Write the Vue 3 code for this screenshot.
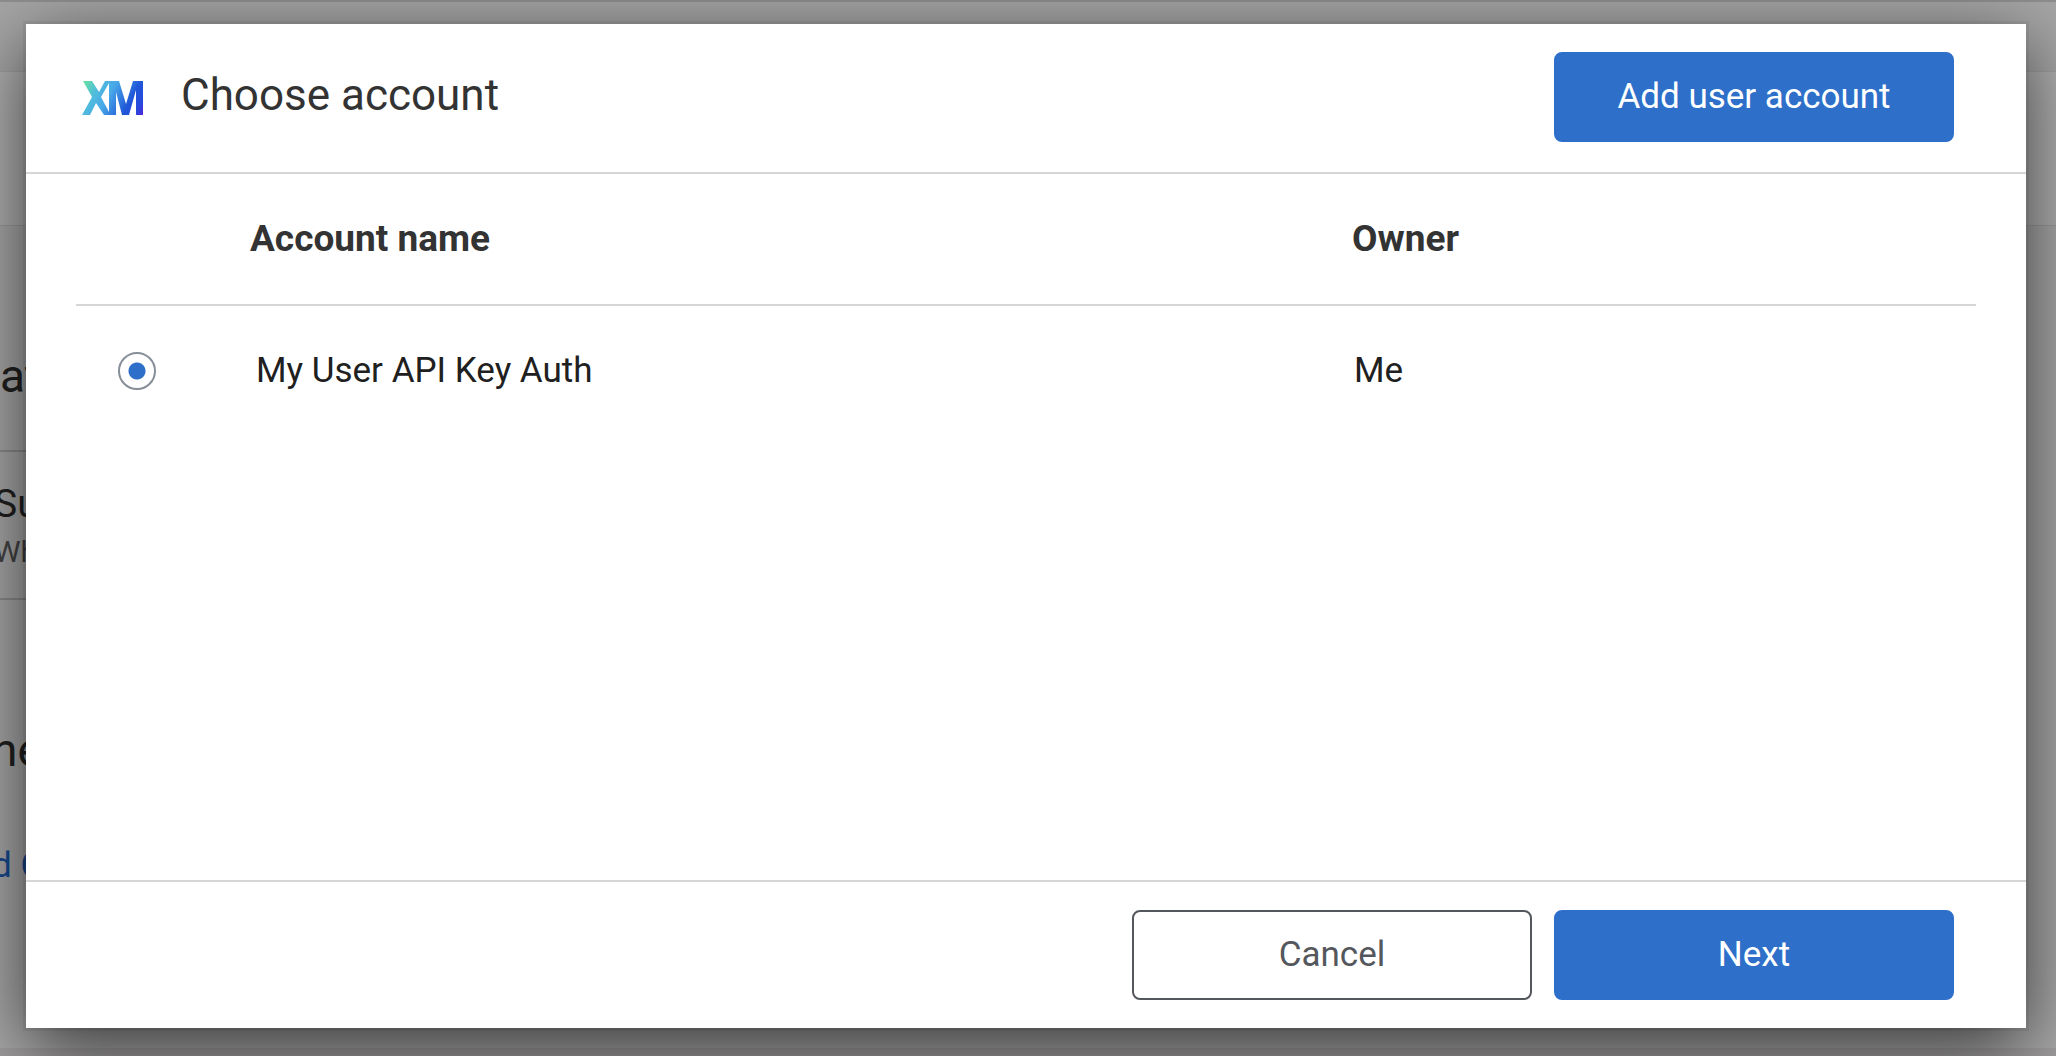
<script setup>
import { ref } from 'vue'

const accounts = [{ id: 'api-key', name: 'My User API Key Auth', owner: 'Me' }]
const selected = ref('api-key')
</script>

<template>
  <div class="screen">
    <div class="page" aria-hidden="true">
      <div class="bar top-bar"></div>
      <div class="bar sub-bar"></div>
      <div class="section heading">at</div>
      <div class="section task">
        <span class="task-name">Su</span>
        <span class="task-note">Wh</span>
      </div>
      <div class="section next-step">
        <span class="heading-text">ne</span>
        <span class="link-text">d C</span>
      </div>
      <div class="page-end"></div>
    </div>

    <div class="overlay">
      <section class="dialog" role="dialog" aria-modal="true" aria-labelledby="dialog-title">
        <header class="dialog-header">
          <svg class="logo" viewBox="0 0 62 34" aria-hidden="true">
            <defs>
              <linearGradient id="xm" gradientUnits="userSpaceOnUse" x1="2" y1="0" x2="62" y2="34">
                <stop offset="0" stop-color="#68e0a0" />
                <stop offset="0.22" stop-color="#50bcdc" />
                <stop offset="0.42" stop-color="#48a8e8" />
                <stop offset="0.72" stop-color="#2058d8" />
                <stop offset="0.88" stop-color="#2848dc" />
                <stop offset="1" stop-color="#5820d8" />
              </linearGradient>
            </defs>
            <path fill="url(#xm)" fill-rule="evenodd" d="M1 0H10L17 11L23 0H37L44 23L51 0H61V34H54V9L47 34H40L34 11V34H22L14 22L8 34H0L10 16ZM27 2L19 16L27 31Z" />
          </svg>
          <h1 id="dialog-title">Choose account</h1>
          <button type="button" class="btn primary">Add user account</button>
        </header>

        <div class="dialog-body">
          <table>
            <thead>
              <tr>
                <th class="pick"></th>
                <th class="name" scope="col">Account name</th>
                <th class="owner" scope="col">Owner</th>
              </tr>
            </thead>
            <tbody>
              <tr v-for="account in accounts" :key="account.id">
                <td class="pick">
                  <input :id="account.id" v-model="selected" type="radio" name="account" :value="account.id" />
                </td>
                <td class="name"><label :for="account.id">{{ account.name }}</label></td>
                <td class="owner">{{ account.owner }}</td>
              </tr>
            </tbody>
          </table>
        </div>

        <footer class="dialog-footer">
          <button type="button" class="btn secondary">Cancel</button>
          <button type="button" class="btn primary">Next</button>
        </footer>
      </section>
    </div>
  </div>
</template>

<style>
body {
  margin: 0;
}
</style>

<style scoped>
* {
  box-sizing: border-box;
}

.screen {
  position: relative;
  min-height: 100vh;
  overflow: hidden;
  font-family: Roboto, "Liberation Sans", sans-serif;
  font-size: 35px;
  line-height: 44px;
  color: #202020;
}

/* dimmed page behind the dialog */
.page {
  position: absolute;
  inset: 0;
  display: flex;
  flex-direction: column;
  background: #a9a9a9;
  white-space: nowrap;
}

.bar {
  flex: none;
}

.top-bar {
  height: 72px;
  border-top: 2px solid #8e8e8e;
  background: #a6a6a6;
  border-bottom: 1px solid #a0a0a0;
}

.sub-bar {
  height: 154px;
  background: #b0b0b0;
  border-bottom: 1px solid #a29c9c;
}

.section {
  flex: none;
  width: 50%;
  border-bottom: 2px solid #8c8c8c;
}

.heading {
  height: 226px;
  padding-top: 128px;
  font-size: 46px;
}

.task {
  display: flex;
  flex-direction: column;
  gap: 4px;
  height: 148px;
  padding-top: 30px;
  text-indent: -6px;
}

.task-name {
  font-size: 39px;
}

.task-note {
  font-size: 30px;
  color: #444;
}

.next-step {
  display: flex;
  flex-direction: column;
  gap: 72px;
  height: 448px;
  padding-top: 128px;
  border-bottom: 0;
  text-indent: -8px;
}

.heading-text {
  font-size: 46px;
}

.link-text {
  color: #174a92;
}

.page-end {
  flex: 1;
  background: #a09e9e;
}

.overlay {
  position: relative;
  display: flex;
  min-height: 100vh;
  padding: 24px 30px 28px 26px;
}

.dialog {
  flex: 1;
  display: flex;
  flex-direction: column;
  background: #fff;
  box-shadow: 0 0 0 3px rgba(0, 0, 0, 0.05), 0 20px 70px rgba(0, 0, 0, 0.68);
}

.dialog-header {
  display: flex;
  align-items: flex-start;
  padding: 28px 72px 30px 56px;
  border-bottom: 2px solid #d6d6d6;
}

.logo {
  width: 62px;
  height: 34px;
  margin-top: 29px;
}

h1 {
  flex: 1;
  margin: 19px 0 0 37px;
  font-size: 44px;
  font-weight: 400;
  line-height: 48px;
  color: #333;
}

.btn {
  width: 400px;
  height: 90px;
  padding: 0;
  border: 2px solid #2d6fc9;
  border-radius: 8px;
  font: inherit;
}

.primary {
  background: #2d6fc9;
  color: #fff;
}

.secondary {
  border-color: #54575c;
  background: #fff;
  color: #54575c;
}

.dialog-body {
  flex: 1;
  padding: 0 50px;
}

table {
  width: 100%;
  table-layout: fixed;
  border-collapse: separate;
  border-spacing: 0;
}

th,
td {
  padding: 0;
  text-align: left;
  vertical-align: middle;
}

th {
  height: 132px;
  border-bottom: 2px solid #d6d6d6;
  color: #333;
  font-size: 37px;
  font-weight: 700;
}

td {
  height: 130px;
}

th.pick {
  width: 174px;
}

th.owner {
  width: 624px;
}

td.pick {
  padding-left: 42px;
}

td.name {
  padding-left: 6px;
}

td.owner {
  padding-left: 2px;
}

input[type="radio"] {
  appearance: none;
  display: block;
  width: 38px;
  height: 38px;
  margin: 0;
  border: 2px solid #868e98;
  border-radius: 50%;
  background: #fff;
}

input[type="radio"]:checked {
  background: radial-gradient(circle, #2d6fc9 8px, #fff 9px);
}

.dialog-footer {
  display: flex;
  justify-content: flex-end;
  gap: 22px;
  padding: 28px 72px;
  border-top: 2px solid #d6d6d6;
}
</style>
